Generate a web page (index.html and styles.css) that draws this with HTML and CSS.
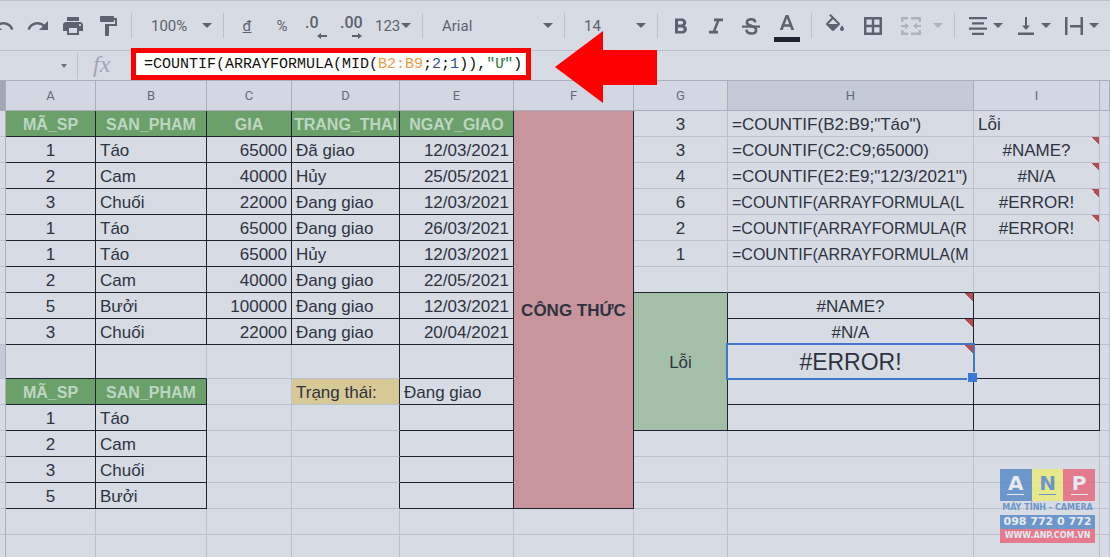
FILE: index.html
```html
<!DOCTYPE html>
<html lang="vi">
<head>
<meta charset="utf-8">
<title>COUNTIF</title>
<link rel="stylesheet" href="styles.css">
</head>
<body>
<div class="app">
  <div class="toolbar" role="toolbar" aria-label="Toolbar">
    <button class="tool undo" aria-label="Undo"><svg width="15" height="24" viewBox="9 0 15 24"><path d="M12.5 8c-2.65 0-5.05.99-6.9 2.6L2 7v9h9l-3.62-3.62c1.39-1.16 3.16-1.88 5.12-1.88 3.54 0 6.55 2.31 7.6 5.5l2.37-.78C21.08 11.03 17.15 8 12.5 8z"/></svg></button>
    <button class="tool" aria-label="Redo"><svg width="24" height="24" viewBox="0 0 24 24"><path d="M18.4 10.6C16.55 8.99 14.15 8 11.5 8c-4.65 0-8.58 3.03-9.96 7.22L3.9 16c1.05-3.19 4.05-5.5 7.6-5.5 1.95 0 3.73.72 5.12 1.88L13 16h9V7l-3.6 3.6z"/></svg></button>
    <button class="tool" aria-label="Print"><svg width="24" height="24" viewBox="0 0 24 24"><path d="M19 8H5c-1.66 0-3 1.34-3 3v6h4v4h12v-4h4v-6c0-1.66-1.340-3-3-3zm-3 11H8v-5h8v5zm3-7c-.55 0-1-.45-1-1s.45-1 1-1 1 .45 1 1-.45 1-1 1zm-1-9H6v4h12V3z"/></svg></button>
    <button class="tool" aria-label="Paint format"><svg width="24" height="24" viewBox="0 0 24 24"><path d="M18 4V3c0-.55-.45-1-1-1H5c-.55 0-1 .45-1 1v4c0 .55.45 1 1 1h12c.55 0 1-.45 1-1V6h1v4H9v11c0 .55.45 1 1 1h2c.55 0 1-.45 1-1v-9h8V4h-3z"/></svg></button>
    <span class="sep"></span>
    <label class="drop zoom"><select aria-label="Zoom"><option>100%</option></select><i class="caret"></i></label>
    <span class="sep"></span>
    <button class="tool" aria-label="Currency"><u>đ</u></button>
    <button class="tool" aria-label="Percent">%</button>
    <button class="tool decimal" aria-label="Decrease decimal places">.0<svg width="10" height="6" viewBox="0 0 10 6"><path d="M4 0v2h6v2H4v2L0 3z"/></svg></button>
    <button class="tool decimal" aria-label="Increase decimal places">.00<svg width="10" height="6" viewBox="0 0 10 6"><path d="M6 0v2H0v2h6v2l4-3z"/></svg></button>
    <button class="tool pair formats" aria-label="More formats">123<i class="caret"></i></button>
    <span class="sep"></span>
    <label class="drop font"><select aria-label="Font"><option>Arial</option></select><i class="caret"></i></label>
    <span class="sep"></span>
    <label class="drop size"><select aria-label="Font size"><option>14</option></select><i class="caret"></i></label>
    <span class="sep"></span>
    <button class="tool" aria-label="Bold"><svg width="24" height="24" viewBox="0 0 24 24"><path d="M15.600 11.790c.97-.67 1.650-1.770 1.650-2.790 0-2.600-1.900-4.600-4.500-4.600H6v15.200h7.600c2.400 0 4.300-1.950 4.300-4.340 0-1.740-.9-2.730-2.300-3.470zM9 7h3.400a1.750 1.750 0 0 1 0 3.500H9zm3.900 10H9v-3.500h3.900a1.750 1.750 0 0 1 0 3.500z"/></svg></button>
    <button class="tool" aria-label="Italic"><svg width="24" height="24" viewBox="0 0 24 24"><path d="M10 4.500v2.700h2.600L8.900 16.800H5v2.700h9v-2.700h-2.400l3.700-9.600H19V4.500z"/></svg></button>
    <button class="tool" aria-label="Strikethrough"><svg width="24" height="24" viewBox="0 0 24 24"><path d="M3 11.500h18v2.200H3z"/><path d="M16.300 8.400C16 6.300 14.400 5.300 12.100 5.300c-2.500 0-4.200 1.200-4.200 3.100 0 2.200 2.300 2.800 4.600 3.500 2.600.8 4.600 1.700 4.600 4 0 2.200-1.900 3.600-4.700 3.600-2.900 0-4.800-1.300-5-3.900" fill="none" stroke="currentColor" stroke-width="2.600"/></svg></button>
    <button class="tool color" aria-label="Text color"><svg width="26" height="18" viewBox="0 0 26 18"><path d="M11.600 1 5.800 16h2.900l1.200-3.300h6.200l1.200 3.300h2.900L14.400 1zm-.9 9.300L13 4.200l2.300 6.100z"/></svg></button>
    <span class="sep"></span>
    <button class="tool fill" aria-label="Fill color"><svg width="24" height="24" viewBox="0 0 24 24"><path d="M16.560 8.940 7.620 0 6.210 1.410l2.380 2.380-5.150 5.150c-.59.59-.59 1.540 0 2.120l5.500 5.500c.29.29.68.44 1.060.44s.77-.15 1.060-.44l5.500-5.500c.59-.58.59-1.530 0-2.120zM5.210 10 10 5.210 14.790 10zM19 11.500s-2 2.170-2 3.500c0 1.100.9 2 2 2s2-.9 2-2c0-1.330-2-3.500-2-3.500z"/></svg></button>
    <button class="tool" aria-label="Borders"><svg width="24" height="24" viewBox="0 0 24 24"><path d="M3 3v18h18V3zm7.800 15.500H5.500v-5.300h5.300zm0-7.700H5.500V5.500h5.300zm7.700 7.700h-5.300v-5.300h5.300zm0-7.700h-5.300V5.500h5.300z"/></svg></button>
    <button class="tool pair merge" aria-label="Merge cells" disabled><svg width="28" height="24" viewBox="0 0 28 24"><path d="M5 3h7v2.500H7.500V8H5zm10 0h10v5h-2.500V5.500H15zM5 16h2.500v2.500H12V21H5zm17.500 0H25v5H15v-2.500h7.500zM5 11h4V8.500l4 3.500-4 3.500V13H5zm20 0h-4V8.500L17 12l4 3.500V13h4z"/></svg><i class="caret"></i></button>
    <span class="sep"></span>
    <button class="tool pair" aria-label="Horizontal align"><svg width="24" height="24" viewBox="0 0 24 24"><path d="M3 3h18v2.200H3zm3 5.300h12v2.200H6zm-3 5.200h18v2.200H3zm3 5.300h12V21H6z"/></svg><i class="caret"></i></button>
    <button class="tool pair" aria-label="Vertical align"><svg width="24" height="24" viewBox="0 0 24 24"><path d="M16 11.500h-3V3h-2v8.500H8l4 4.500zM4 18.500V21h16v-2.500z"/></svg><i class="caret"></i></button>
    <button class="tool pair" aria-label="Text wrapping"><svg width="24" height="24" viewBox="0 0 24 24"><path d="M3 3h2.500v18H3zm15.500 0H21v18h-2.500zM8 11h10.500v2.400H8z"/></svg><i class="caret"></i></button>
  </div>

  <div class="formula-bar">
    <button class="name-box" aria-label="Name box"><i class="caret small"></i></button>
    <span class="fx">fx</span>
    <div class="formula" role="textbox" contenteditable="true" spellcheck="false" aria-label="Formula">=COUNTIF(ARRAYFORMULA(MID(<span class="ref">B2:B9</span>;<span class="num">2</span>;<span class="num">1</span>)),<span class="str">"Ư"</span>)</div>
    <svg class="arrow" width="102" height="72" viewBox="0 0 102 72"><path d="M0 36 48 0v19h54v35H48v18z"/></svg>
  </div>

  <table class="sheet">
    <colgroup><col class="c-row"><col class="c-a"><col class="c-b"><col class="c-c"><col class="c-d"><col class="c-e"><col class="c-f"><col class="c-g"><col class="c-h"><col class="c-i"><col></colgroup>
    <thead>
      <tr><th class="corner"></th><th>A</th><th>B</th><th>C</th><th>D</th><th>E</th><th>F</th><th>G</th><th class="active">H</th><th>I</th><th></th></tr>
    </thead>
    <tbody>
      <tr><th></th><td class="box head">MÃ_SP</td><td class="box head">SAN_PHAM</td><td class="box head">GIA</td><td class="box head">TRANG_THAI</td><td class="box head">NGAY_GIAO</td><td class="box pink" rowspan="15">CÔNG THỨC</td><td class="mid">3</td><td>=COUNTIF(B2:B9;"Táo")</td><td>Lỗi</td><td></td></tr>
      <tr><th></th><td class="box mid">1</td><td class="box">Táo</td><td class="box end">65000</td><td class="box">Đã giao</td><td class="box end">12/03/2021</td><td class="mid">3</td><td>=COUNTIF(C2:C9;65000)</td><td class="mid note">#NAME?</td><td></td></tr>
      <tr><th></th><td class="box mid">2</td><td class="box">Cam</td><td class="box end">40000</td><td class="box">Hủy</td><td class="box end">25/05/2021</td><td class="mid">4</td><td>=COUNTIF(E2:E9;"12/3/2021")</td><td class="mid note">#N/A</td><td></td></tr>
      <tr><th></th><td class="box mid">3</td><td class="box">Chuối</td><td class="box end">22000</td><td class="box">Đang giao</td><td class="box end">12/03/2021</td><td class="mid">6</td><td class="long">=COUNTIF(ARRAYFORMULA(L</td><td class="mid note">#ERROR!</td><td></td></tr>
      <tr><th></th><td class="box mid">1</td><td class="box">Táo</td><td class="box end">65000</td><td class="box">Đang giao</td><td class="box end">26/03/2021</td><td class="mid">2</td><td class="long">=COUNTIF(ARRAYFORMULA(R</td><td class="mid note">#ERROR!</td><td></td></tr>
      <tr><th></th><td class="box mid">1</td><td class="box">Táo</td><td class="box end">65000</td><td class="box">Hủy</td><td class="box end">12/03/2021</td><td class="mid">1</td><td class="long">=COUNTIF(ARRAYFORMULA(M</td><td></td><td></td></tr>
      <tr><th></th><td class="box mid">2</td><td class="box">Cam</td><td class="box end">40000</td><td class="box">Đang giao</td><td class="box end">22/05/2021</td><td class="under"></td><td class="under"></td><td class="under"></td><td></td></tr>
      <tr><th></th><td class="box mid">5</td><td class="box">Bưởi</td><td class="box end">100000</td><td class="box">Đang giao</td><td class="box end">12/03/2021</td><td class="box mid green" rowspan="5">Lỗi</td><td class="box mid note">#NAME?</td><td class="box"></td><td></td></tr>
      <tr><th></th><td class="box mid">3</td><td class="box">Chuối</td><td class="box end">22000</td><td class="box">Đang giao</td><td class="box end">20/04/2021</td><td class="box mid note">#N/A</td><td class="box"></td><td></td></tr>
      <tr class="tall"><th class="active"></th><td class="box"></td><td class="under"></td><td></td><td class="side"></td><td class="box"></td><td class="box mid note selected">#ERROR!</td><td class="box"></td><td></td></tr>
      <tr><th></th><td class="box head">MÃ_SP</td><td class="box head">SAN_PHAM</td><td></td><td class="side yellow">Trạng thái:</td><td class="box">Đang giao</td><td class="box"></td><td class="box"></td><td></td></tr>
      <tr><th></th><td class="box mid">1</td><td class="box">Táo</td><td></td><td class="side"></td><td class="box"></td><td class="box"></td><td class="box"></td><td></td></tr>
      <tr><th></th><td class="box mid">2</td><td class="box">Cam</td><td></td><td class="side"></td><td class="box"></td><td></td><td></td><td></td><td></td></tr>
      <tr><th></th><td class="box mid">3</td><td class="box">Chuối</td><td></td><td class="side"></td><td class="box"></td><td></td><td></td><td></td><td></td></tr>
      <tr><th></th><td class="box mid">5</td><td class="box">Bưởi</td><td></td><td class="side"></td><td class="box"></td><td></td><td></td><td></td><td></td></tr>
      <tr><th></th><td></td><td></td><td></td><td></td><td></td><td></td><td></td><td></td><td></td><td></td></tr>
      <tr><th></th><td></td><td></td><td></td><td></td><td></td><td></td><td></td><td></td><td></td><td></td></tr>
    </tbody>
  </table>

  <div class="logo">
    <div class="tiles"><span class="tile blue"><b>A</b></span><span class="tile lemon"><b>N</b></span><span class="tile red"><b>P</b></span></div>
    <div class="tagline">MÁY TÍNH - CAMERA</div>
    <div class="phone">098 772 0 772</div>
    <div class="site">WWW.ANP.COM.VN</div>
  </div>
</div>
</body>
</html>
```
FILE: styles.css
```css
* { box-sizing: border-box; }

body {
  margin: 0;
  background: #d6dbe4;
  color: #2f333f;
  font-family: "Liberation Sans", Arial, sans-serif;
}

.app {
  position: relative;
  height: 100vh;
  overflow: hidden;
  border-top: 1px solid #bcc1cc;
}

button, select {
  margin: 0;
  padding: 0;
  border: 0;
  background: none;
  color: inherit;
  font: inherit;
}

svg { display: block; flex: none; fill: currentColor; }

/* Toolbar */
.toolbar {
  display: flex;
  align-items: center;
  gap: 11px;
  height: 50px;
  border-bottom: 1px solid #bcc1cc;
  color: #5d626e;
  font: 15px/24px Roboto, sans-serif;
}

.tool {
  display: flex;
  flex: none;
  align-items: center;
  justify-content: center;
  width: 24px;
  height: 30px;
}

.undo { width: 15px; }
.fill { width: 27px; justify-content: flex-start; }
.pair { width: 37px; justify-content: space-between; }
.formats { width: 36px; }
.merge { width: 47px; color: #aeb3be; }

.decimal {
  flex-direction: column;
  align-items: flex-start;
  font-weight: 500;
  font-size: 16px;
  line-height: 20px;
}
.decimal svg { align-self: flex-end; margin-right: 2px; }

.color {
  flex-direction: column;
  width: 26px;
  height: 32px;
  border-bottom: 5px solid #1f2330;
}

.sep { flex: none; width: 1px; height: 25px; background: #bcc1cc; }

.caret {
  flex: none;
  border: 5px solid transparent;
  border-top-color: currentColor;
  border-bottom: 0;
}
.caret.small { border-width: 4px 3px 0; }

.drop {
  display: flex;
  flex: none;
  align-items: center;
  padding-left: 8px;
}
.drop select { flex: 1; min-width: 0; appearance: none; outline: 0; }
.zoom { width: 69px; }
.font { width: 119px; }
.size { width: 70px; }

/* Formula bar */
.formula-bar {
  position: relative;
  display: flex;
  align-items: center;
  height: 30px;
  border-bottom: 1px solid #a9aebb;
}

.name-box {
  display: flex;
  align-items: center;
  justify-content: flex-end;
  width: 78px;
  height: 26px;
  padding-right: 10px;
  border-right: 1px solid #bcc1cc;
  color: #6b707c;
}

.fx {
  width: 53px;
  padding: 0 0 4px 15px;
  color: #a2a7b2;
  font: italic 24px/24px "Liberation Serif", serif;
}

.formula {
  z-index: 1;
  width: 400px;
  height: 32px;
  margin-top: -3px;
  padding-left: 8px;
  border: 5px solid #ff0000;
  background: #fff;
  color: #111;
  font: 15px/24px "Liberation Mono", monospace;
  white-space: nowrap;
  outline: 0;
}
.ref { color: #f29a3f; }
.num { color: #2c4c9c; }
.str { color: #2c7a3f; }

.arrow {
  position: absolute;
  z-index: 2;
  top: -20px;
  left: 555px;
  fill: #ff0000;
}

/* Sheet */
.sheet {
  width: 100%;
  table-layout: fixed;
  border-spacing: 0;
  font-size: 17px;
  line-height: 23px;
}

.c-row { width: 6px; }
.c-a { width: 90px; }
.c-b { width: 111px; }
.c-c { width: 85px; }
.c-d { width: 108px; }
.c-e { width: 114px; }
.c-f { width: 120px; }
.c-g { width: 94px; }
.c-h { width: 246px; }
.c-i { width: 126px; }

.sheet th, .sheet td {
  height: 26px;
  padding: 2px 4px 0;
  border-right: 1px solid #bcc1cd;
  border-bottom: 1px solid #bcc1cd;
  overflow: hidden;
  white-space: nowrap;
}
.sheet th { padding: 0; border-right-color: #a9aebb; }

.sheet thead th {
  height: 30px;
  border-color: #a9aebb;
  background: #d2d7e2;
  color: #666b77;
  font: 13px/28px Roboto, sans-serif;
}
.sheet thead .corner { background: #a2a7b1; }
.sheet .active, .sheet thead .active { background: #c5cad8; }

.sheet .box { border-color: #1f2330; }
.sheet .under { border-bottom-color: #1f2330; }
.sheet .side { border-right-color: #1f2330; }
.mid, .sheet .head, .pink { text-align: center; }
.end { text-align: right; }
.long { font-size: 16px; }

.sheet .head {
  padding: 2px 1px 0;
  background: #6ca06b;
  color: #bdd6c2;
  font-size: 16px;
  font-weight: bold;
}
.pink { background: #c8959d; font-weight: bold; }
.green { background: #a3bfa8; }
.yellow { background: #d6c996; }

.tall td, .tall th { height: 34px; }

.note {
  background: linear-gradient(to top right, transparent 50%, #b24e52 50%) right top / 8px 8px no-repeat;
}

.sheet .selected {
  position: relative;
  overflow: visible;
  font-size: 23px;
}
.selected::before {
  content: "";
  position: absolute;
  inset: -2px;
  border: 2px solid #3f78c8;
}
.selected::after {
  content: "";
  position: absolute;
  right: -4px;
  bottom: -4px;
  width: 9px;
  height: 9px;
  border: 1px solid #d6dbe4;
  border-right: 0;
  border-bottom: 0;
  background: #3879d9;
}

/* Watermark */
.logo {
  position: absolute;
  right: 15px;
  bottom: 14px;
  width: 95px;
  opacity: .85;
  color: #e9edf4;
  font-family: "DejaVu Sans", sans-serif;
  font-weight: bold;
  text-align: center;
  white-space: nowrap;
}
.tiles { display: flex; }
.tile {
  display: flex;
  flex: 1;
  justify-content: center;
  height: 32px;
  font-size: 20px;
  line-height: 29px;
}
.tile b {
  display: flex;
  justify-content: center;
  width: 17px;
  height: 26px;
  border-bottom: 1px solid currentColor;
}
.blue, .phone { background: #5b8cc6; }
.lemon { background: #eaea7c; color: #5b8cc6; }
.red, .site { background: #e66a80; }
.tagline {
  color: #5b8cc6;
  font-size: 8px;
  line-height: 14px;
}
.phone { font-size: 11px; line-height: 14px; }
.site { font-size: 8px; line-height: 14px; }
```
